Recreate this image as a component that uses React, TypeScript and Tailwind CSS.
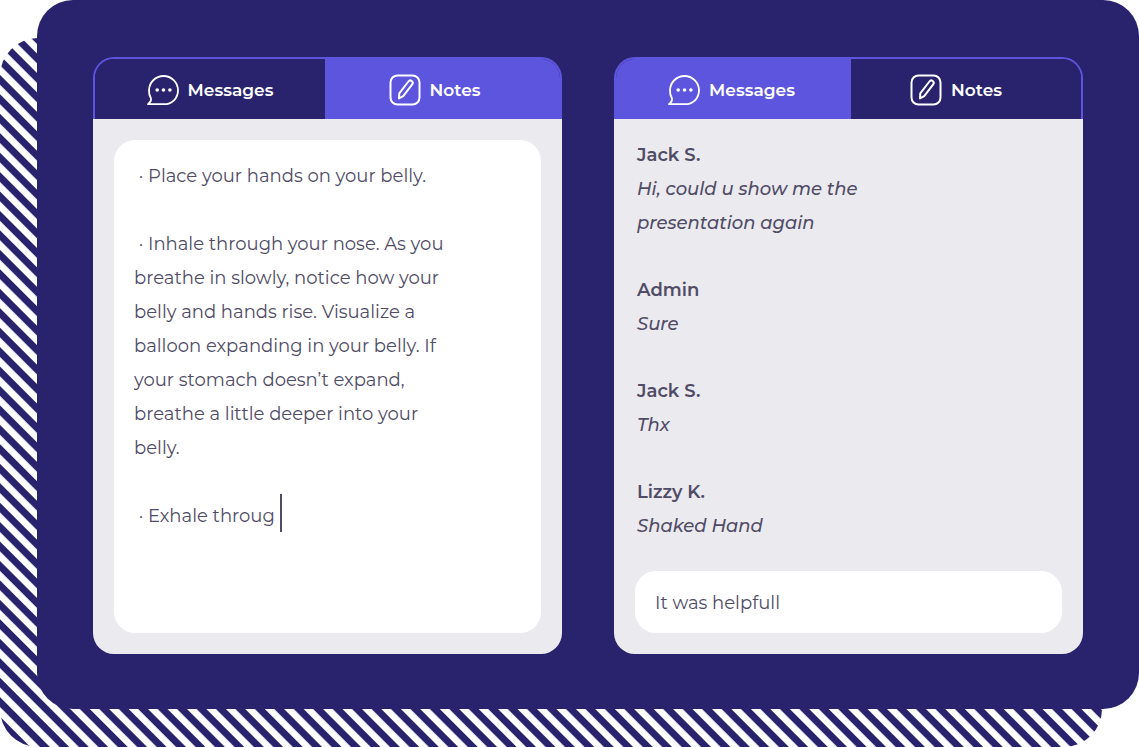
import React from "react";

function ChatIcon() {
  return (
    <svg width="32" height="32" viewBox="0 0 32 32" fill="none" stroke="white" strokeWidth="1.8" strokeLinejoin="round" aria-hidden="true">
      <path d="M1 30.200C3.200 28.400 4.600 26.600 3.900 24.300A14.200 14.200 0 0 1 2 16.500A14.500 14.500 0 0 1 16.500 2A14.500 14.500 0 0 1 31 16.200C31 24.400 25 30.200 17 30.200Z" />
      <g fill="white" stroke="none">
        <circle cx="10.200" cy="16" r="1.800" />
        <circle cx="16.500" cy="16" r="1.800" />
        <circle cx="22.900" cy="16" r="1.800" />
      </g>
    </svg>
  );
}

function NoteIcon() {
  return (
    <svg width="32" height="32" viewBox="0 0 32 32" fill="none" stroke="white" strokeWidth="2" strokeLinejoin="round" aria-hidden="true">
      <rect x="1.500" y="1.500" width="29" height="29" rx="7" />
      <path d="M10 24.400L10.300 19.300L19.400 7.500A2.350 2.350 0 0 1 23.200 10.300L14.200 22.200Z" />
    </svg>
  );
}

type TabName = "Messages" | "Notes";

function Tabs({ active }: { active: TabName }) {
  const columns = active === "Notes" ? "grid-cols-[230fr_235fr]" : "grid-cols-[235fr_230fr]";
  return (
    <div role="tablist" className={`grid h-[62px] overflow-hidden rounded-t-[21px] border-x-2 border-t-2 border-[#5d55de] bg-[#29226d] text-[17px] font-semibold text-white ${columns}`}>
      <button
        type="button"
        role="tab"
        aria-selected={active === "Messages"}
        className={`flex items-center justify-center gap-[9px] pt-0.5 ${active === "Messages" ? "bg-[#5d55de] pr-1" : "bg-[#29226d]"}`}
      >
        <ChatIcon />
        Messages
      </button>
      <button
        type="button"
        role="tab"
        aria-selected={active === "Notes"}
        className={`flex items-center justify-center gap-[9px] pt-0.5 ${active === "Notes" ? "bg-[#5d55de] pr-4" : "bg-[#29226d] pr-5"}`}
      >
        <NoteIcon />
        Notes
      </button>
    </div>
  );
}

const notes = [
  " · Place your hands on your belly.",
  " · Inhale through your nose. As you breathe in slowly, notice how your belly and hands rise. Visualize a balloon expanding in your belly. If your stomach doesn’t expand, breathe a little deeper into your belly.",
  " · Exhale throug",
].join("\n\n");

const messages = [
  { author: "Jack S.", text: "Hi, could u show me the presentation again" },
  { author: "Admin", text: "Sure" },
  { author: "Jack S.", text: "Thx" },
  { author: "Lizzy K.", text: "Shaked Hand" },
];

export default function App() {
  return (
    <main className="relative min-h-screen overflow-hidden bg-white pb-[38px] pl-[37px] font-['Montserrat','Inter',sans-serif] text-[18px] leading-[34px] text-[#504c66]">
      <svg className="absolute top-[38px] left-0 h-[calc(100%-38px)] w-[calc(100%-37px)] rounded-[38px]" aria-hidden="true">
        <defs>
          <pattern id="stripes" width="20" height="13.750" patternUnits="userSpaceOnUse" patternTransform="translate(21.500 0) rotate(45)">
            <rect width="20" height="7" fill="#29226d" />
          </pattern>
        </defs>
        <rect width="100%" height="100%" fill="url(#stripes)" />
      </svg>
      <div className="relative grid grid-cols-2 gap-[52px] rounded-[36px] bg-[#29226d] px-14 pt-[57px] pb-[55px]">
        <section className="flex flex-col">
          <Tabs active="Notes" />
          <div className="flex grow rounded-b-[21px] bg-[#ebeaef] p-[21px]">
            <div className="relative flex grow rounded-[21px] bg-white px-5 pt-[19px] pb-5">
              <textarea aria-label="Notes" defaultValue={notes} className="w-full max-w-[320px] resize-none overflow-hidden bg-transparent outline-none" />
              <span className="absolute top-[354px] left-[166px] h-[38px] w-0.5 bg-[#504c66]" aria-hidden="true" />
            </div>
          </div>
        </section>
        <section className="flex flex-col">
          <Tabs active="Messages" />
          <div className="flex grow flex-col rounded-b-[21px] bg-[#ebeaef] px-[21px] pt-[19px] pb-[21px]">
            <ul className="flex flex-col gap-[33px] px-0.5">
              {messages.map((m, i) => (
                <li key={i} className="max-w-[240px]">
                  <p className="font-semibold">{m.author}</p>
                  <p className="font-medium italic">{m.text}</p>
                </li>
              ))}
            </ul>
            <input aria-label="Message" defaultValue="It was helpfull" className="mt-7 h-[62px] w-full rounded-[21px] bg-white px-5 pt-0.5 outline-none" />
          </div>
        </section>
      </div>
    </main>
  );
}
